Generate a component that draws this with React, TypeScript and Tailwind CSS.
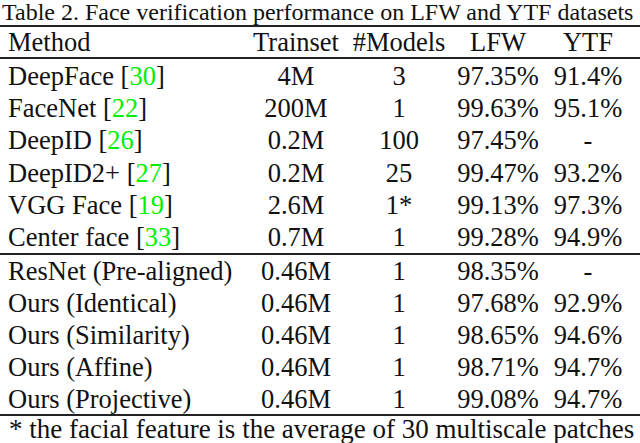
import React from 'react';

type Row = { method: string; cite?: string; trainset: string; models: string; lfw: string; ytf: string; h: string };

const groupA: Row[] = [
  { method: 'DeepFace', cite: '30', trainset: '4M', models: '3', lfw: '97.35%', ytf: '91.4%', h: 'h-[33px]' },
  { method: 'FaceNet', cite: '22', trainset: '200M', models: '1', lfw: '99.63%', ytf: '95.1%', h: 'h-[32px]' },
  { method: 'DeepID', cite: '26', trainset: '0.2M', models: '100', lfw: '97.45%', ytf: '-', h: 'h-[32px]' },
  { method: 'DeepID2+', cite: '27', trainset: '0.2M', models: '25', lfw: '99.47%', ytf: '93.2%', h: 'h-[33px]' },
  { method: 'VGG Face', cite: '19', trainset: '2.6M', models: '1*', lfw: '99.13%', ytf: '97.3%', h: 'h-[32px]' },
  { method: 'Center face', cite: '33', trainset: '0.7M', models: '1', lfw: '99.28%', ytf: '94.9%', h: 'h-[32px]' },
];

const groupB: Row[] = [
  { method: 'ResNet (Pre-aligned)', trainset: '0.46M', models: '1', lfw: '98.35%', ytf: '-', h: 'h-[32px]' },
  { method: 'Ours (Identical)', trainset: '0.46M', models: '1', lfw: '97.68%', ytf: '92.9%', h: 'h-[32px]' },
  { method: 'Ours (Similarity)', trainset: '0.46M', models: '1', lfw: '98.65%', ytf: '94.6%', h: 'h-[32px]' },
  { method: 'Ours (Affine)', trainset: '0.46M', models: '1', lfw: '98.71%', ytf: '94.7%', h: 'h-[32px]' },
  { method: 'Ours (Projective)', trainset: '0.46M', models: '1', lfw: '99.08%', ytf: '94.7%', h: 'h-[31px]' },
];

const cols = 'grid grid-cols-[240px_112px_94px_104px_76px] items-center';

function TableRow({ r }: { r: Row }) {
  return (
    <div className={`${cols} ${r.h}`}>
      <div className="pl-[8px] whitespace-nowrap">
        {r.method}
        {r.cite && (
          <>
            {' '}[<span className="text-[#00f000]">{r.cite}</span>]
          </>
        )}
      </div>
      <div className="text-center">{r.trainset}</div>
      <div className="text-center">{r.models}</div>
      <div className="text-center">{r.lfw}</div>
      <div className="text-center">{r.ytf}</div>
    </div>
  );
}

export default function App() {
  return (
    <div className="w-[640px] h-[443px] bg-white text-[#111] overflow-hidden font-['Liberation_Serif',serif] text-[26.5px] leading-[32px]">
      <div className="h-[25px] pl-[2px] text-[24px] leading-[25px] whitespace-nowrap">
        Table 2. Face verification performance on LFW and YTF datasets
      </div>
      <div className="h-[2px] bg-[#222]" />
      <div className={`${cols} h-[30px] leading-[30px]`}>
        <div className="pl-[8px]">Method</div>
        <div className="text-center">Trainset</div>
        <div className="text-center">#Models</div>
        <div className="text-center">LFW</div>
        <div className="text-center">YTF</div>
      </div>
      <div className="h-[2px] bg-[#222]" />
      {groupA.map((r) => (
        <TableRow key={r.method} r={r} />
      ))}
      <div className="h-[2px] bg-[#222]" />
      {groupB.map((r) => (
        <TableRow key={r.method} r={r} />
      ))}
      <div className="h-[2px] bg-[#222]" />
      <div className="pl-[9px] h-[27px] leading-[27px] text-[27px] whitespace-nowrap">
        * the facial feature is the average of 30 multiscale patches
      </div>
    </div>
  );
}
